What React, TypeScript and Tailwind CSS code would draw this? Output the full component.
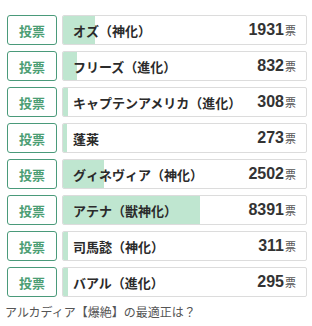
const candidates = [
  { name: 'オズ（神化）', votes: 1931 },
  { name: 'フリーズ（進化）', votes: 832 },
  { name: 'キャプテンアメリカ（進化）', votes: 308 },
  { name: '蓬莱', votes: 273 },
  { name: 'グィネヴィア（神化）', votes: 2502 },
  { name: 'アテナ（獣神化）', votes: 8391 },
  { name: '司馬懿（神化）', votes: 311 },
  { name: 'バアル（進化）', votes: 295 },
];

const total = candidates.reduce((s, c) => s + c.votes, 0);

export default function App() {
  return (
    <div
      className="w-[312px] h-[326px] bg-white overflow-hidden pt-[15px] pl-[7px] pr-[5px]"
      style={{ fontFamily: '"Noto Sans CJK JP", "Liberation Sans", sans-serif' }}
    >
      <div className="flex flex-col gap-[6px]">
        {candidates.map((c) => (
          <div key={c.name} className="flex gap-[5px] h-[30px]">
            <button className="w-[50px] shrink-0 border border-[#4a9a7a] rounded-[3px] text-[#4c9e74] text-[13px] font-bold leading-none bg-white">
              投票
            </button>
            <div className="relative flex-1 border border-[#dcdcdc] rounded-[2px] overflow-hidden flex items-center pl-[10px] pr-[10px]">
              <div
                className="absolute left-0 top-0 bottom-0 bg-[#bfe6d0]"
                style={{ width: `${(c.votes / total) * 100}%` }}
              ></div>
              <span className="relative flex-1 text-[13px] font-bold text-[#2b2b2b] leading-none">{c.name}</span>
              <span className="relative flex items-baseline">
                <span
                  className="text-[16px] font-bold text-[#333] leading-none"
                  style={{ fontFamily: '"Liberation Sans", Arial, sans-serif' }}
                >
                  {c.votes}
                </span>
                <span className="ml-[1px] text-[11px] text-[#555] leading-none">票</span>
              </span>
            </div>
          </div>
        ))}
      </div>
      <p className="mt-[9px] -ml-[2px] text-[12px] text-[#555] leading-none">アルカディア【爆絶】の最適正は？</p>
    </div>
  );
}
